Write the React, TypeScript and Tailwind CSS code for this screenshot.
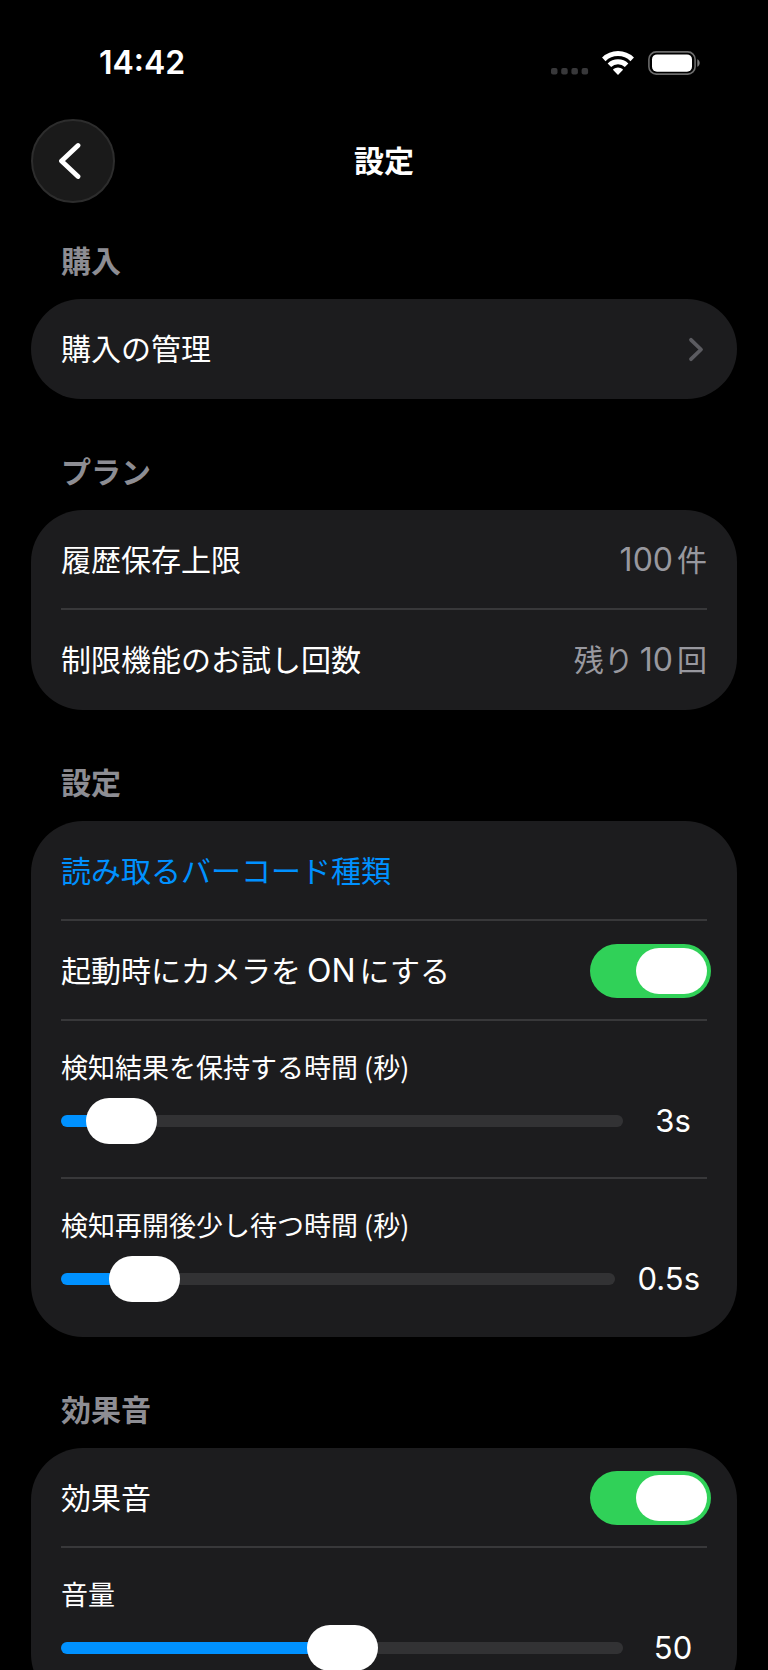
import { useId, useState } from 'react';
import type { CSSProperties, ReactNode } from 'react';

// Digits and latin words sit slightly larger than the kana/kanji around them
function Latin({ children }: { children: ReactNode }) {
  return <span className="mr-1 ml-[6px] text-[32px]">{children}</span>;
}

function StatusBar() {
  return (
    <div className="flex h-[119px] items-center justify-between pt-[6px] pr-[68px] pl-[99px]">
      <time className="text-[32px] leading-10 font-semibold">14:42</time>
      <div className="flex items-center">
        <svg className="mr-[13px] h-6 w-[38px]" viewBox="0 0 38 24" fill="#38383a" aria-hidden="true">
          <rect x="0" y="17" width="6.5" height="6.5" rx="2" />
          <rect x="10.2" y="17" width="6.5" height="6.5" rx="2" />
          <rect x="20.4" y="17" width="6.5" height="6.5" rx="2" />
          <rect x="30.6" y="17" width="6.5" height="6.5" rx="2" />
        </svg>
        <svg className="mr-[14px] h-6 w-8" viewBox="0 0 32 24" aria-hidden="true">
          <g fill="none" stroke="#fff" strokeWidth="5">
            <path d="M1.8 8.4a20.3 20.3 0 0 1 28.4 0" />
            <path d="M7.4 14.2a12.3 12.3 0 0 1 17.2 0" />
          </g>
          <path d="M16 24l-4.6-4.7c-.4-.4-.4-.9 0-1.2a7 7 0 0 1 9.2 0c.4.3.4.8 0 1.2z" fill="#fff" />
        </svg>
        <svg className="h-6 w-[52px]" viewBox="0 0 52 24" aria-hidden="true">
          <rect x="0.9" y="0.9" width="46.2" height="22.2" rx="7.4" fill="none" stroke="#6b6b6b" strokeWidth="1.6" />
          <rect x="4" y="3.4" width="40" height="17.4" rx="5" fill="#fff" />
          <path d="M49.3 8.2c1.4.6 2.4 2 2.4 3.8s-1 3.2-2.4 3.8z" fill="#7a7a7a" />
        </svg>
      </div>
    </div>
  );
}

function Header() {
  return (
    <header className="grid grid-cols-[84px_1fr_84px] items-center px-[31px]">
      <button
        type="button"
        aria-label="戻る"
        className="flex size-[84px] items-center justify-center rounded-full border-2 border-[#2d2d2d] bg-[#1a1a1a]"
      >
        <svg className="mr-2 h-[38px] w-6" viewBox="0 0 24 38" fill="none" aria-hidden="true">
          <path d="M21 3.5L4.5 19L21 34.5" stroke="#fff" strokeWidth="4.8" strokeLinecap="round" strokeLinejoin="round" />
        </svg>
      </button>
      <h1 className="text-center text-[30px] leading-10 font-bold">設定</h1>
    </header>
  );
}

function Section({ title, children }: { title: string; children: ReactNode }) {
  return (
    <section>
      <h2 className="mb-[18px] px-[30px] text-[30px] leading-10 font-bold text-[#8d8d93]">{title}</h2>
      <div className="rounded-[52px] bg-[#1c1c1e] px-[30px]">{children}</div>
    </section>
  );
}

const rowClass =
  'flex min-h-[100px] w-full items-center justify-between border-b-2 border-[#38383a] pt-[2px] text-left text-[30px] leading-10 last:border-transparent';

function ValueRow({ label, children }: { label: string; children: ReactNode }) {
  return (
    <div className={rowClass}>
      <span>{label}</span>
      <span className="text-[#98989f]">{children}</span>
    </div>
  );
}

function ToggleRow({ children }: { children: ReactNode }) {
  const [on, setOn] = useState(true);

  return (
    <label className={rowClass}>
      <span>{children}</span>
      <input
        type="checkbox"
        role="switch"
        checked={on}
        onChange={(e) => setOn(e.target.checked)}
        className="-mr-1 flex h-[54px] w-[121px] appearance-none items-center rounded-full bg-[#39393d] p-1 before:h-[46px] before:w-[71px] before:rounded-full before:bg-white checked:justify-end checked:bg-[#30d158]"
      />
    </label>
  );
}

interface SliderRowProps {
  label: string;
  max: number;
  step: number;
  initial: number;
  unit?: string;
}

function SliderRow({ label, max, step, initial, unit = '' }: SliderRowProps) {
  const id = useId();
  const [value, setValue] = useState(initial);
  const fill = { '--fill': `${(value / max) * 100}%` } as CSSProperties;

  return (
    <div className="border-b-2 border-[#38383a] pt-7 pb-[33px] last:border-transparent">
      <label htmlFor={id} className="block font-['Noto_Sans_CJK_JP',sans-serif] text-[27px] leading-9">
        {label}
      </label>
      <div className="mt-[13px] flex items-center gap-4">
        <input
          id={id}
          type="range"
          min={0}
          max={max}
          step={step}
          value={value}
          onChange={(e) => setValue(Number(e.target.value))}
          style={fill}
          className="h-[46px] min-w-0 flex-1 appearance-none bg-transparent [&::-webkit-slider-runnable-track]:h-3 [&::-webkit-slider-runnable-track]:rounded-full [&::-webkit-slider-runnable-track]:bg-[linear-gradient(to_right,#0091ff_var(--fill),#323234_var(--fill))] [&::-webkit-slider-thumb]:-mt-[17px] [&::-webkit-slider-thumb]:h-[46px] [&::-webkit-slider-thumb]:w-[71px] [&::-webkit-slider-thumb]:appearance-none [&::-webkit-slider-thumb]:rounded-full [&::-webkit-slider-thumb]:bg-white"
        />
        <output htmlFor={id} className="min-w-[68px] px-[7px] text-center text-[31px] leading-10">
          {value}
          {unit}
        </output>
      </div>
    </div>
  );
}

export default function App() {
  return (
    <div className="h-screen overflow-y-auto bg-black font-['Inter','Noto_Sans_CJK_JP',sans-serif] text-white [scrollbar-width:none]">
      <StatusBar />
      <Header />
      <main className="mt-[38px] flex flex-col gap-[53px] px-[31px] pb-12">
        <Section title="購入">
          <button type="button" className={rowClass}>
            <span>購入の管理</span>
            <svg className="mr-[3px] h-[25px] w-4" viewBox="0 0 16 25" fill="none" aria-hidden="true">
              <path d="M3 2.8L13 12.5L3 22.2" stroke="#5b5b60" strokeWidth="3.8" strokeLinecap="round" strokeLinejoin="round" />
            </svg>
          </button>
        </Section>

        <Section title="プラン">
          <ValueRow label="履歴保存上限">
            <Latin>100</Latin>件
          </ValueRow>
          <ValueRow label="制限機能のお試し回数">
            残り<Latin>10</Latin>回
          </ValueRow>
        </Section>

        <Section title="設定">
          <button type="button" className={rowClass}>
            <span className="text-[#0091ff]">読み取るバーコード種類</span>
          </button>
          <ToggleRow>
            起動時にカメラを<Latin>ON</Latin>にする
          </ToggleRow>
          <SliderRow label="検知結果を保持する時間 (秒)" max={60} step={1} initial={3} unit="s" />
          <SliderRow label="検知再開後少し待つ時間 (秒)" max={5} step={0.1} initial={0.5} unit="s" />
        </Section>

        <Section title="効果音">
          <ToggleRow>効果音</ToggleRow>
          <SliderRow label="音量" max={100} step={1} initial={50} />
        </Section>
      </main>
    </div>
  );
}
